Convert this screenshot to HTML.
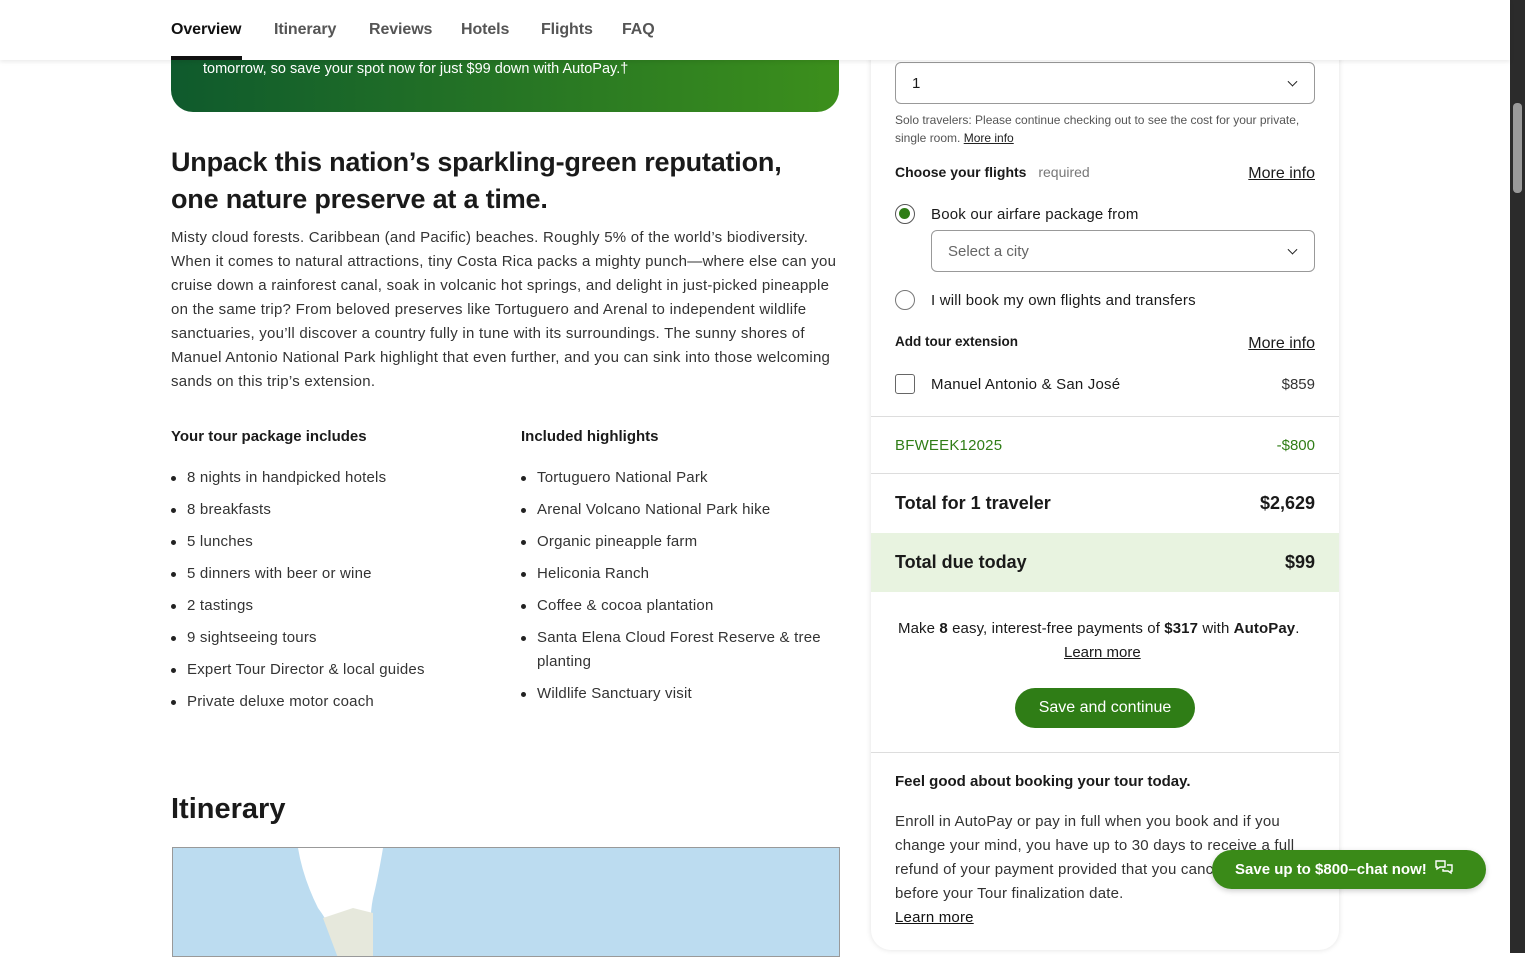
<!DOCTYPE html>
<html><head><meta charset="utf-8"><style>
*{box-sizing:border-box;margin:0;padding:0}
body{width:1525px;height:953px;overflow:hidden;background:#fff;font-family:"Liberation Sans",sans-serif;color:#1a1a1a;position:relative}
.nav{position:absolute;left:0;top:0;width:1510px;height:60px;background:#fff;box-shadow:0 2px 4px rgba(0,0,0,.08);z-index:5}
.nav span{position:absolute;top:21px;font-size:16px;color:#555;font-weight:bold;letter-spacing:-.1px}
.nav .act{color:#111}
.nav .bar{position:absolute;left:171px;top:56px;width:71px;height:4px;background:#111}
.banner{position:absolute;left:171px;top:40px;width:668px;height:72px;border-radius:0 0 22px 22px;background:linear-gradient(90deg,#0f5a2d,#3c8f1c)}
.banner p{position:absolute;left:32px;top:21px;color:#fff;font-size:14.5px}
h1{position:absolute;left:171px;top:144px;font-size:27px;line-height:37px;font-weight:bold;width:640px;letter-spacing:-.2px}
.para{position:absolute;left:171px;top:226px;width:670px;font-size:15px;line-height:24px;color:#333;letter-spacing:.25px}
h3{position:absolute;font-size:15px;font-weight:bold}
ul{position:absolute;list-style:none;font-size:15px;color:#333;letter-spacing:.2px}
ul li{position:relative;padding-left:16px;line-height:24px;margin-bottom:8px}
ul li:before{content:"";position:absolute;left:0;top:10px;width:5px;height:5px;border-radius:50%;background:#222}
h2{position:absolute;left:171px;top:793px;font-size:29px;font-weight:bold}
.map{position:absolute;left:172px;top:847px;width:668px;height:110px;background:#bcdcf0;border:1px solid #999;overflow:hidden}
.card{position:absolute;left:871px;top:40px;width:468px;height:910px;background:#fff;border-radius:0 0 20px 20px;box-shadow:0 0 6px rgba(0,0,0,.12)}
.sel{position:absolute;border:1px solid #999;border-radius:6px;background:#fff;font-size:15px}
.chev{position:absolute;right:18px;top:50%;width:7px;height:7px;border-right:1.8px solid #222;border-bottom:1.8px solid #222;transform:translateY(-70%) rotate(45deg)}
.t{position:absolute;white-space:nowrap}
.r{position:absolute;white-space:nowrap;right:210px}
.u{text-decoration:underline}
.radio{position:absolute;width:20px;height:20px;border:1.5px solid #777;border-radius:50%}
.sep{position:absolute;left:871px;width:468px;height:1px;background:#ddd}
.btn{position:absolute;left:1015px;top:688px;width:180px;height:40px;border-radius:20px;background:#2f7d16;color:#fff;font-size:16px;text-align:center;line-height:40px}
.chat{position:absolute;left:1212px;top:850px;width:274px;height:39px;border-radius:20px;background:#3a8a18;color:#fff;font-size:15px;font-weight:bold;line-height:39px;padding-left:23px;box-shadow:0 2px 6px rgba(0,0,0,.2)}
.sb{position:absolute;left:1510px;top:0;width:15px;height:953px;background:#2b2b2b}
</style></head><body>
<div class="banner"><p>tomorrow, so save your spot now for just $99 down with AutoPay.†</p></div>
<div class="nav">
<span class="act" style="left:171px">Overview</span><span style="left:274px">Itinerary</span><span style="left:369px">Reviews</span><span style="left:461px">Hotels</span><span style="left:541px">Flights</span><span style="left:622px">FAQ</span>
<div class="bar"></div></div>
<h1>Unpack this nation’s sparkling-green reputation, one nature preserve at a time.</h1>
<div class="para">Misty cloud forests. Caribbean (and Pacific) beaches. Roughly 5% of the world’s biodiversity. When it comes to natural attractions, tiny Costa Rica packs a mighty punch—where else can you cruise down a rainforest canal, soak in volcanic hot springs, and delight in just-picked pineapple on the same trip? From beloved preserves like Tortuguero and Arenal to independent wildlife sanctuaries, you’ll discover a country fully in tune with its surroundings. The sunny shores of Manuel Antonio National Park highlight that even further, and you can sink into those welcoming sands on this trip’s extension.</div>
<h3 style="left:171px;top:428px">Your tour package includes</h3>
<h3 style="left:521px;top:428px">Included highlights</h3>
<ul style="left:171px;top:466px"><li>8 nights in handpicked hotels</li><li>8 breakfasts</li><li>5 lunches</li><li>5 dinners with beer or wine</li><li>2 tastings</li><li>9 sightseeing tours</li><li>Expert Tour Director &amp; local guides</li><li>Private deluxe motor coach</li></ul>
<ul style="left:521px;top:466px;width:310px"><li>Tortuguero National Park</li><li>Arenal Volcano National Park hike</li><li>Organic pineapple farm</li><li>Heliconia Ranch</li><li>Coffee &amp; cocoa plantation</li><li>Santa Elena Cloud Forest Reserve &amp; tree planting</li><li>Wildlife Sanctuary visit</li></ul>
<h2>Itinerary</h2>
<div class="map"><svg width="668" height="110"><path d="M125 0 L210 0 Q205 30 200 50 Q195 75 200 110 L170 110 Q160 80 145 60 Q130 30 125 0 Z" fill="#fff"/><path d="M150 70 L180 60 L200 65 L200 110 L165 110 Z" fill="#e6e8dc"/></svg></div>
<div class="card"></div>
<div class="sel" style="left:895px;top:62px;width:420px;height:42px"><span class="t" style="left:16px;top:12px">1</span><div class="chev"></div></div>
<div class="t" style="left:895px;top:111px;font-size:12px;color:#555;line-height:18px;white-space:normal;width:420px">Solo travelers: Please continue checking out to see the cost for your private, single room. <span class="u" style="color:#222">More info</span></div>
<div class="t" style="left:895px;top:164px;font-size:14px;font-weight:bold">Choose your flights <span style="font-weight:normal;color:#777;margin-left:8px">required</span></div>
<div class="r u" style="top:165px;font-size:16px">More info</div>
<div class="radio" style="left:895px;top:204px;border-color:#555"><div style="position:absolute;left:3px;top:3px;width:11px;height:11px;border-radius:50%;background:#2f7d16"></div></div>
<div class="t" style="left:931px;top:206px;font-size:15px;letter-spacing:.2px">Book our airfare package from</div>
<div class="sel" style="left:931px;top:230px;width:384px;height:42px"><span class="t" style="left:16px;top:12px;color:#666">Select a city</span><div class="chev"></div></div>
<div class="radio" style="left:895px;top:290px"></div>
<div class="t" style="left:931px;top:292px;font-size:15px;letter-spacing:.2px">I will book my own flights and transfers</div>
<div class="t" style="left:895px;top:334px;font-size:13.5px;font-weight:bold">Add tour extension</div>
<div class="r u" style="top:335px;font-size:16px">More info</div>
<div style="position:absolute;left:895px;top:374px;width:20px;height:20px;border:1.5px solid #666;border-radius:3px"></div>
<div class="t" style="left:931px;top:376px;font-size:15px;letter-spacing:.2px">Manuel Antonio &amp; San José</div>
<div class="r" style="top:376px;font-size:15px;color:#333">$859</div>
<div class="sep" style="top:416px"></div>
<div class="t" style="left:895px;top:437px;font-size:15px;color:#2f7d16;letter-spacing:.2px">BFWEEK12025</div>
<div class="r" style="top:437px;font-size:15px;color:#2f7d16">-$800</div>
<div class="sep" style="top:473px"></div>
<div class="t" style="left:895px;top:493px;font-size:18px;font-weight:bold">Total for 1 traveler</div>
<div class="r" style="top:493px;font-size:18px;font-weight:bold">$2,629</div>
<div style="position:absolute;left:871px;top:533px;width:468px;height:59px;background:#e8f3e0"></div>
<div class="t" style="left:895px;top:552px;font-size:18px;font-weight:bold">Total due today</div>
<div class="r" style="top:552px;font-size:18px;font-weight:bold">$99</div>
<div class="t" style="left:898px;top:620px;font-size:15px;letter-spacing:.1px">Make <b>8</b> easy, interest-free payments of <b>$317</b> with <b>AutoPay</b>.</div>
<div class="t u" style="left:1064px;top:644px;font-size:15px">Learn more</div>
<div class="btn">Save and continue</div>
<div class="sep" style="top:752px"></div>
<div class="t" style="left:895px;top:773px;font-size:15px;font-weight:bold">Feel good about booking your tour today.</div>
<div class="t" style="left:895px;top:810px;font-size:15px;line-height:24px;color:#333;white-space:normal;width:400px;letter-spacing:.2px">Enroll in AutoPay or pay in full when you book and if you change your mind, you have up to 30 days to receive a full refund of your payment provided that you cancel<br>before your Tour finalization date.<br><span class="u" style="color:#111">Learn more</span></div>
<div class="chat">Save up to $800–chat now! <svg width="18" height="16" viewBox="0 0 18 16" style="vertical-align:-2px;margin-left:4px" fill="none" stroke="#fff" stroke-width="1.4"><path d="M1 1h9v6H5l-3 2V7H1z"/><path d="M12 5h5v6h-1v2l-3-2H8V9"/></svg></div>
<div class="sb"><div style="position:absolute;left:3px;top:103px;width:9px;height:90px;border-radius:4px;background:#9a9a9a"></div></div>
</body></html>
